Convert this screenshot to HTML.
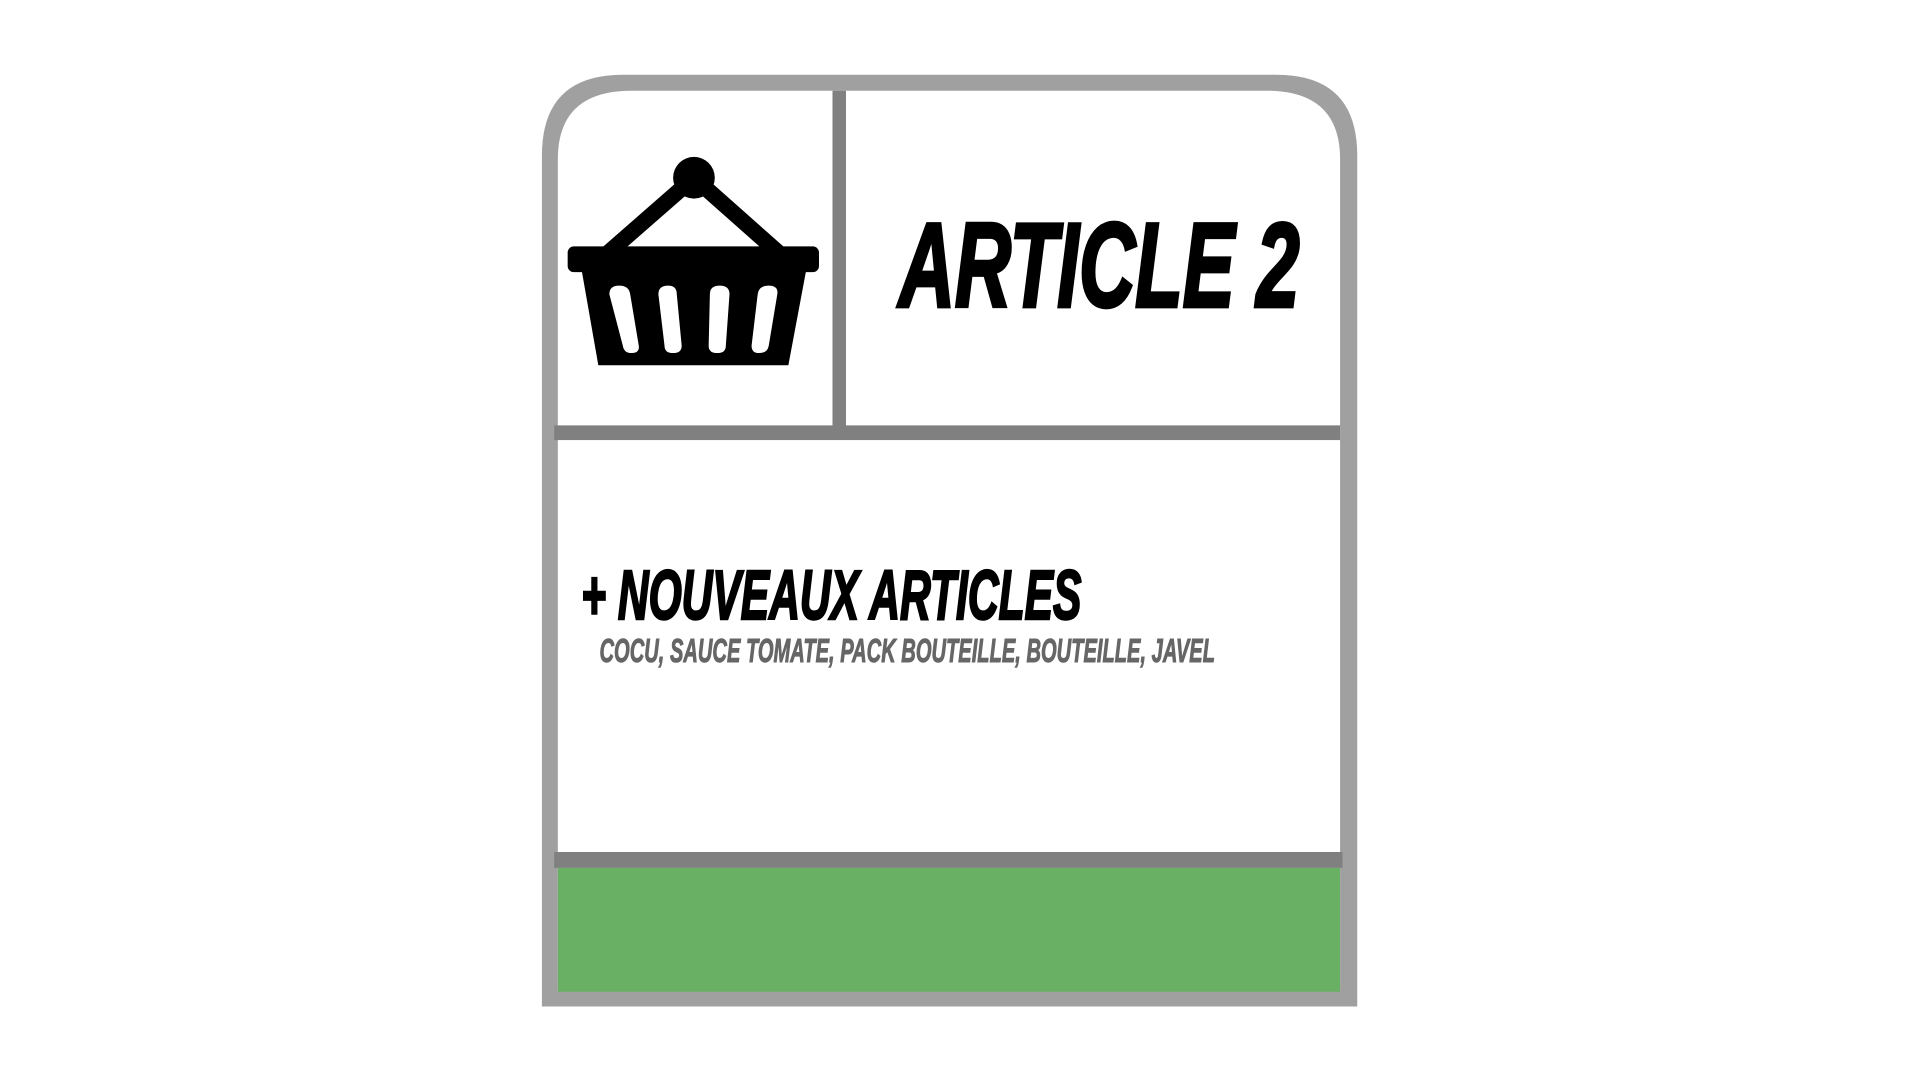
<!DOCTYPE html>
<html><head><meta charset="utf-8"><style>html,body{margin:0;padding:0;background:#fff;overflow:hidden}svg{display:block}</style></head>
<body>
<svg width="1920" height="1080" viewBox="0 0 1566 881" preserveAspectRatio="none" xmlns="http://www.w3.org/2000/svg">
<rect width="1566" height="881" fill="#fff"/>
<path d="M442 821 V127 Q442 61 508 61 H1041 Q1107 61 1107 127 V821 Z" fill="#a0a0a0"/>
<path d="M455 808 V130 Q455 74 515 74 H1033 Q1093 74 1093 130 V808 Z" fill="#fff"/>
<rect x="679" y="74" width="11" height="275" fill="#808080"/>
<rect x="452" y="347" width="641" height="12" fill="#808080"/>
<rect x="452" y="695" width="643" height="13" fill="#808080"/>
<rect x="455" y="708" width="638" height="101" fill="#69b064"/>
<g fill="#000">
<line x1="566" y1="145" x2="494" y2="208" stroke="#000" stroke-width="13"/>
<line x1="566" y1="145" x2="637" y2="208" stroke="#000" stroke-width="13"/>
<circle cx="566" cy="145" r="17"/>
<rect x="463" y="201" width="205" height="21" rx="5"/>
<path d="M474 218 H658 L643 298 H488 Z"/>
</g>
<g fill="#fff">
<path d="M497 240 Q497 233 505 233 Q513 233 514 240 L521 282 Q522 288 515 288 Q509 288 508 282 Z"/>
<path d="M537 240 Q537 233 545 233 Q552 233 552 240 L556 282 Q556 288 549 288 Q542 288 542 282 Z"/>
<path d="M579 240 Q579 233 587 233 Q595 233 595 240 L592 282 Q592 288 585 288 Q578 288 578 282 Z"/>
<path d="M618 240 Q619 233 627 233 Q635 233 634 240 L627 282 Q626 288 619 288 Q613 288 613 282 Z"/>
</g>
<text x="733" y="250" font-family="Liberation Sans, sans-serif" font-weight="bold" font-style="italic" font-size="98" textLength="327" lengthAdjust="spacingAndGlyphs" fill="#000" stroke="#000" stroke-width="3">ARTICLE 2</text>
<text x="474" y="505" font-family="Liberation Sans, sans-serif" font-weight="bold" font-style="italic" font-size="57" textLength="408" lengthAdjust="spacingAndGlyphs" fill="#000" stroke="#000" stroke-width="2">+ NOUVEAUX ARTICLES</text>
<text x="489" y="540" font-family="Liberation Sans, sans-serif" font-weight="bold" font-style="italic" font-size="27" textLength="502" lengthAdjust="spacingAndGlyphs" fill="#666" stroke="#666" stroke-width="0.8">COCU, SAUCE TOMATE, PACK BOUTEILLE, BOUTEILLE, JAVEL</text>
</svg>
</body></html>
